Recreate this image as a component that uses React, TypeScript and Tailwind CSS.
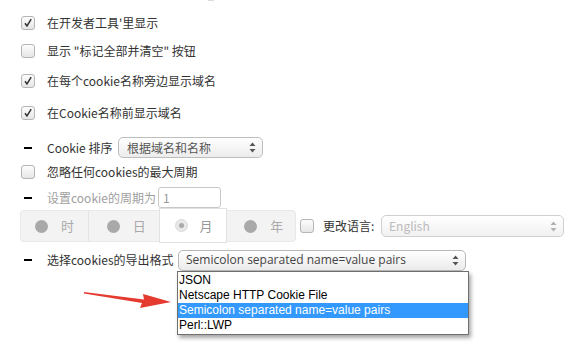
import React from "react";

const CJK = { fontFamily: '"Noto Sans CJK SC", "Noto Sans", sans-serif' };

function Check({ checked }: { checked?: boolean }) {
  return (
    <div className="w-[14px] h-[14px] rounded-[3px] border border-[#b5b5b5] bg-gradient-to-b from-[#fdfdfd] to-[#e6e6e6] flex items-center justify-center shrink-0">
      {checked && (
        <svg width="10" height="10" viewBox="0 0 10 10">
          <path d="M2 5.2 L4 8 L8.2 1.2" fill="none" stroke="#333" strokeWidth="1.5" />
        </svg>
      )}
    </div>
  );
}

function Dash() {
  return <div className="w-[8px] h-[2px] bg-black ml-[3px] mr-[15px] shrink-0" />;
}

function Arrows({ light }: { light?: boolean }) {
  const c = light ? "#b0b0b0" : "#555";
  return (
    <svg width="7" height="11" viewBox="0 0 7 11">
      <path d="M3.5 0.5 L6.5 4 L0.5 4 Z" fill={c} />
      <path d="M3.5 10.5 L6.5 7 L0.5 7 Z" fill={c} />
    </svg>
  );
}

function Radio({ active }: { active?: boolean }) {
  if (active)
    return (
      <div className="w-[13px] h-[13px] rounded-full bg-[#e8e8e8] border border-[#d8d8d8] flex items-center justify-center">
        <div className="w-[5px] h-[5px] rounded-full bg-[#aaa]" />
      </div>
    );
  return <div className="w-[13px] h-[13px] rounded-full bg-[#a9a9a9]" />;
}

export default function App() {
  return (
    <div className="relative w-[575px] h-[361px] bg-white overflow-hidden text-[12px] text-[#333]" style={CJK}>
      <div className="absolute left-[208px] top-0 w-[6px] h-[1px] bg-[#ddd]" />
      <div className="flex flex-col pl-[21px]">
        <div className="flex items-center h-[20px] mt-[13px] gap-[12px]">
          <Check checked />
          <span>在开发者工具'里显示</span>
        </div>
        <div className="flex items-center h-[20px] mt-[8px] gap-[12px]">
          <Check />
          <span>显示 "标记全部并清空" 按钮</span>
        </div>
        <div className="flex items-center h-[20px] mt-[10px] gap-[12px]">
          <Check checked />
          <span>在每个cookie名称旁边显示域名</span>
        </div>
        <div className="flex items-center h-[20px] mt-[12px] gap-[12px]">
          <Check checked />
          <span>在Cookie名称前显示域名</span>
        </div>
        <div className="flex items-center h-[21px] mt-[14px]">
          <Dash />
          <span className="w-[71px]">Cookie 排序</span>
          <div className="w-[145px] h-[21px] rounded-[5px] border border-[#bdbdbd] bg-gradient-to-b from-[#ffffff] to-[#ececec] flex items-center justify-between pl-[8px] pr-[6px] text-[#555]">
            <span>根据域名和名称</span>
            <Arrows />
          </div>
        </div>
        <div className="flex items-center h-[20px] mt-[4px] gap-[12px]">
          <Check />
          <span>忽略任何cookies的最大周期</span>
        </div>
        <div className="flex items-center h-[21px] mt-[5px]">
          <Dash />
          <span className="w-[111px] text-[#a0a0a0]">设置cookie的周期为</span>
          <div className="w-[63px] h-[21px] rounded-[3px] border border-[#c8c8c8] bg-white pl-[4px] flex items-center text-[#999]">
            1
          </div>
        </div>
        <div className="flex items-center h-[32px] mt-[2px] -ml-[1px]">
          <div className="flex h-[32px] w-[276px] rounded-[4px] border border-[#e8e8e8] bg-[#f3f3f3] text-[13px]">
            <div className="w-[68px] flex items-center pl-[14px] gap-[13px] border-r border-[#e4e4e4] text-[#aaa]">
              <Radio />
              <span>时</span>
            </div>
            <div className="w-[70px] flex items-center pl-[18px] gap-[13px] text-[#aaa]">
              <Radio />
              <span>日</span>
            </div>
            <div className="w-[69px] -mt-[3px] h-[35px] flex items-center pl-[15px] gap-[12px] bg-white border border-[#e2e2e2] text-[#999]">
              <Radio active />
              <span>月</span>
            </div>
            <div className="w-[68px] flex items-center pl-[17px] gap-[13px] text-[#aaa]">
              <Radio />
              <span>年</span>
            </div>
          </div>
          <div className="ml-[4px]">
            <Check />
          </div>
          <span className="ml-[9px] w-[58px]">更改语言:</span>
          <div className="w-[183px] h-[22px] rounded-[5px] border border-[#cfcfcf] bg-gradient-to-b from-[#ffffff] to-[#f1f1f1] flex items-center justify-between pl-[7px] pr-[6px] text-[#bbb]">
            <span>English</span>
            <Arrows light />
          </div>
        </div>
        <div className="flex items-center h-[20px] mt-[8px]">
          <Dash />
          <span className="w-[131px]">选择cookies的导出格式</span>
          <div className="relative w-[288px] h-[21px] rounded-[5px] border border-[#b8b8b8] bg-gradient-to-b from-[#ffffff] to-[#ebebeb] flex items-center justify-between pl-[7px] pr-[6px] text-[#444]">
            <span style={{ fontFamily: '"Open Sans", sans-serif', fontSize: "12px" }}>Semicolon separated name=value pairs</span>
            <Arrows />
            <div
              className="absolute left-[-2px] top-[20px] w-[292px] bg-white border border-[#6f6f6f] shadow-[2px_3px_4px_rgba(0,0,0,0.35)] text-[12px] text-black leading-[15px] py-[1px]"
              style={{ fontFamily: '"Liberation Sans", Arial, sans-serif' }}
            >
              <div className="px-[1px]">JSON</div>
              <div className="px-[1px]">Netscape HTTP Cookie File</div>
              <div className="px-[1px] bg-[#3399ff] text-white">Semicolon separated name=value pairs</div>
              <div className="px-[1px]">Perl::LWP</div>
            </div>
          </div>
        </div>
      </div>
      <svg className="absolute left-[82px] top-[285px]" width="92" height="24" viewBox="0 0 92 24">
        <path d="M2 7 L62 14.5 L61 9 L89 17 L58 23 L60 18 L2 8.6 Z" fill="#e53a2f" />
      </svg>
    </div>
  );
}
